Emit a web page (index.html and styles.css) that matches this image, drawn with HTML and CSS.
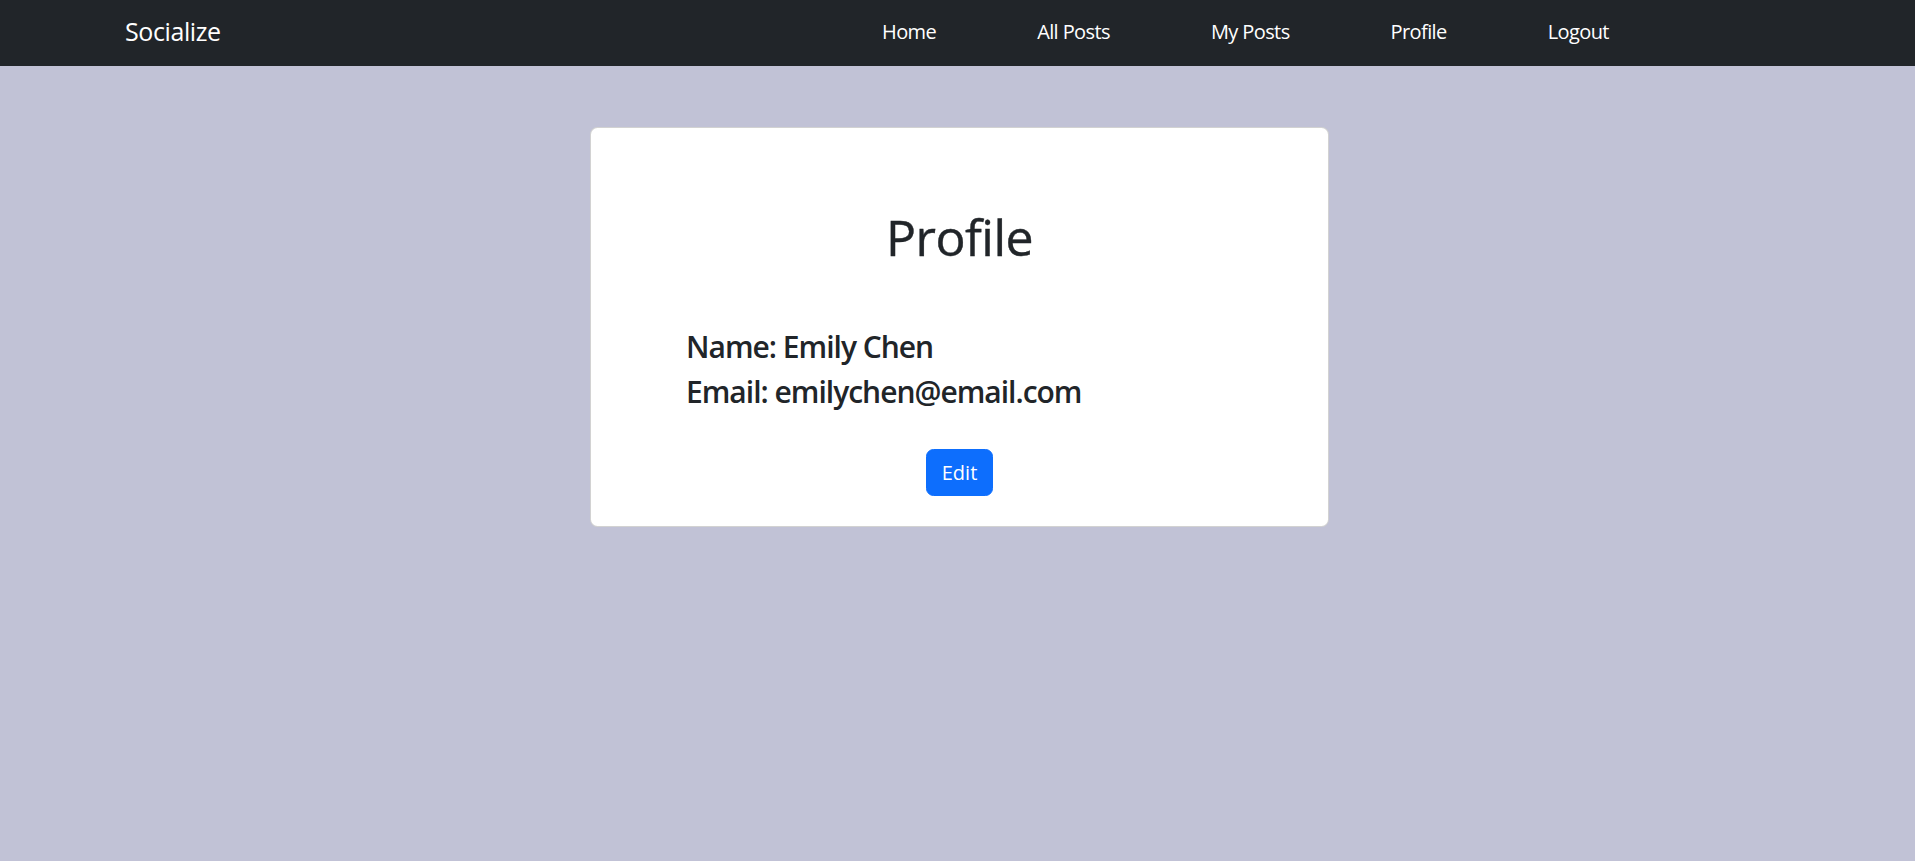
FILE: index.html
```html
<!DOCTYPE html>
<html lang="en">
<head>
<meta charset="utf-8">
<title>Socialize - Profile</title>
<link rel="stylesheet" href="styles.css">
</head>
<body>
<nav class="navbar">
  <a class="brand" href="#">Socialize</a>
  <ul class="nav-links">
    <li><a href="#">Home</a></li>
    <li><a href="#">All Posts</a></li>
    <li><a href="#">My Posts</a></li>
    <li><a href="#">Profile</a></li>
    <li><a href="#">Logout</a></li>
  </ul>
</nav>
<main class="page">
  <section class="card">
    <h1 class="card-title">Profile</h1>
    <div class="details">
      <h4 class="detail">Name: Emily Chen</h4>
      <h4 class="detail">Email: emilychen@email.com</h4>
    </div>
    <div class="actions">
      <button class="btn" type="button">Edit</button>
    </div>
  </section>
</main>
</body>
</html>
```
FILE: styles.css
```css
* { box-sizing: border-box; }
html, body {
  margin: 0;
  padding: 0;
}
body {
  background: #c1c2d6;
  font-family: "Open Sans", "Noto Sans", sans-serif;
  color: #212529;
  min-height: 861px;
}
.navbar {
  background: #212529;
  height: 66px;
  display: grid;
  grid-template-columns: 757px auto;
  align-items: start;
  padding: 12px 0 0 125px;
}
.brand {
  color: #fff;
  text-decoration: none;
  font-size: 25px;
  line-height: 38px;
  font-weight: 400;
  letter-spacing: -0.4px;
}
.nav-links {
  list-style: none;
  margin: 5px 0 0;
  padding: 0;
  display: flex;
  gap: 101px;
}
.nav-links a {
  color: #fff;
  text-decoration: none;
  font-size: 20px;
  line-height: 30px;
  letter-spacing: -0.6px;
}
.page {
  display: flex;
  justify-content: center;
  padding: 61px 0 0 4px;
}
.card {
  width: 739px;
  background: #fff;
  border: 1px solid rgba(0, 0, 0, 0.175);
  border-radius: 7.5px;
  padding: 79px 20px 30px 95px;
}
.card-title {
  margin: 0;
  font-size: 50px;
  line-height: 60px;
  font-weight: 500;
  text-align: center;
  padding-right: 75px;
  letter-spacing: -0.5px;
  -webkit-text-stroke: 0.4px #212529;
}
.details {
  margin-top: 62px;
  display: flex;
  flex-direction: column;
  gap: 9px;
}
.detail {
  margin: 0;
  font-size: 30px;
  line-height: 36px;
  font-weight: 600;
  letter-spacing: -1px;
}
.actions {
  margin-top: 39px;
  display: flex;
  justify-content: center;
  padding-right: 75px;
}
.btn {
  font-family: inherit;
  font-size: 20px;
  line-height: 30px;
  padding: 7.5px 15px;
  color: #fff;
  background: #0d6efd;
  border: 1px solid #0d6efd;
  border-radius: 7.5px;
  cursor: pointer;
}
```
